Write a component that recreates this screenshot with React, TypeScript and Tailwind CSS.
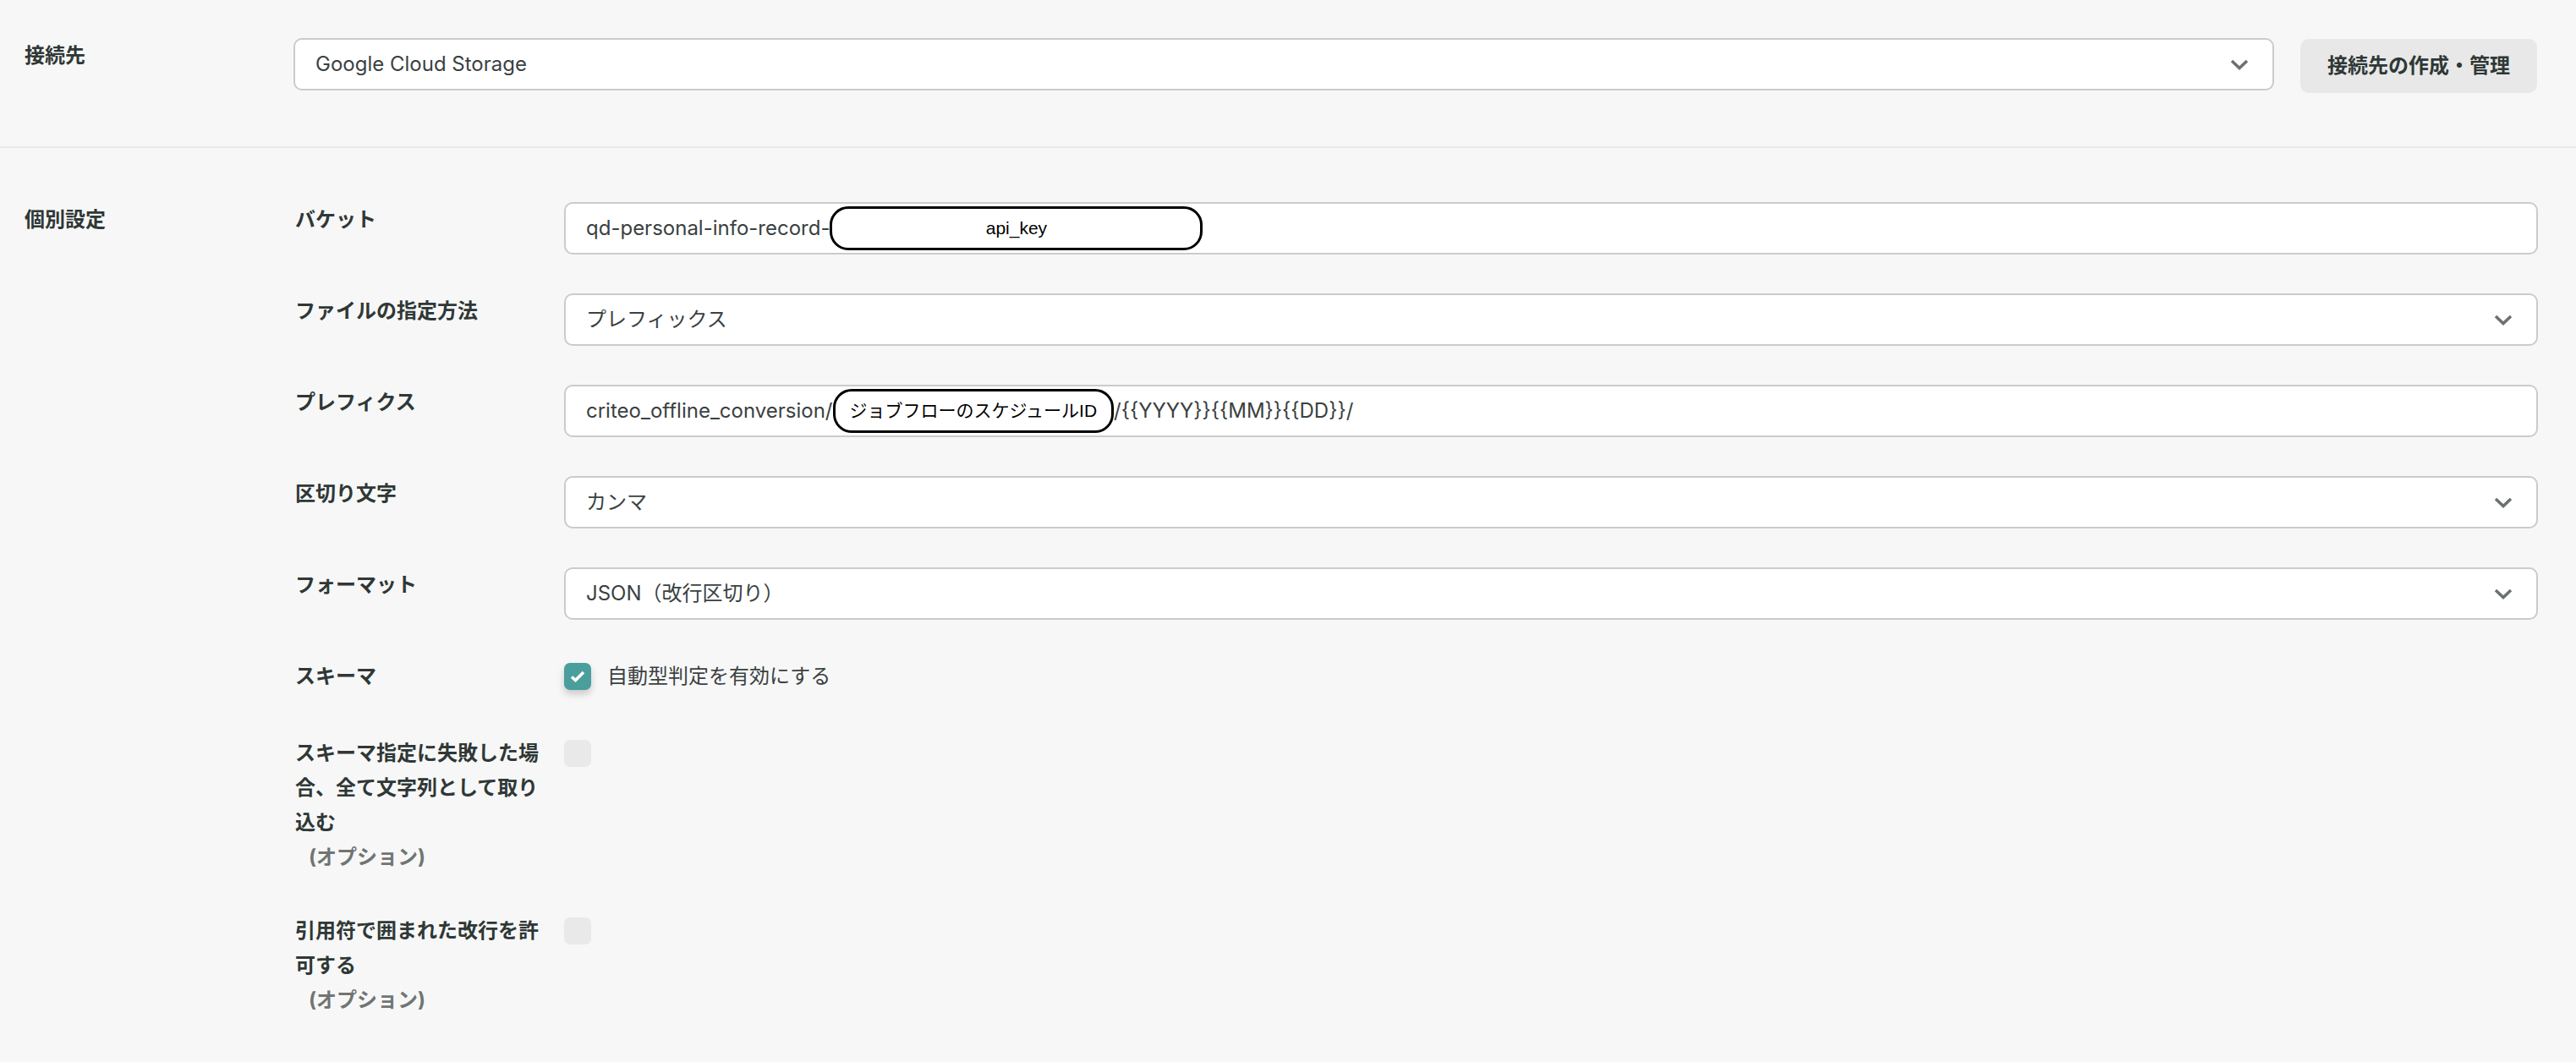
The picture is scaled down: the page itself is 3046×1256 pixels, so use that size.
import React from "react";

const Chevron = () => (
  <svg width="22" height="13" viewBox="0 0 22 13" fill="none">
    <path d="M2 2L11 10.5L20 2" stroke="#6b7070" strokeWidth="3.5" />
  </svg>
);

const Pill: React.FC<{ children: React.ReactNode; className?: string }> = ({
  children,
  className,
}) => (
  <span
    className={
      "inline-flex h-[52px] items-center justify-center rounded-[22px] border-[3px] border-black bg-white font-['Liberation_Sans','Noto_Sans_CJK_JP',sans-serif] text-[21px] text-black " +
      (className ?? "")
    }
  >
    {children}
  </span>
);

const Select: React.FC<{ value: string }> = ({ value }) => (
  <div className="flex h-[62px] flex-1 items-center justify-between rounded-[10px] border-2 border-[#cbcbcb] bg-white pl-[24px] pr-[28px] text-[#3a4141]">
    <span>{value}</span>
    <Chevron />
  </div>
);

const Checkbox: React.FC<{ checked?: boolean }> = ({ checked }) =>
  checked ? (
    <span className="mt-[5px] flex h-[32px] w-[32px] shrink-0 items-center justify-center rounded-[7px] bg-[#4a9e9c] shadow-[0_5px_9px_rgba(0,0,0,0.18)]">
      <svg width="18" height="14" viewBox="0 0 18 14" fill="none">
        <path d="M2 7.5L6.5 11.5L16 2" stroke="white" strokeWidth="3.6" />
      </svg>
    </span>
  ) : (
    <span className="mt-[5px] block h-[32px] w-[32px] shrink-0 rounded-[7px] bg-[#e9e9e9]" />
  );

const Row: React.FC<{
  label: React.ReactNode;
  children: React.ReactNode;
  className?: string;
}> = ({ label, children, className }) => (
  <div className={"flex items-start " + (className ?? "")}>
    <div className="w-[318px] shrink-0 pr-[24px] font-bold leading-[41px]">
      {label}
    </div>
    {children}
  </div>
);

const Optional = () => (
  <span className="block pl-[16px] text-[#6f7573]">(オプション)</span>
);

export default function App() {
  return (
    <div className="min-h-screen bg-[#f7f7f7] font-['Inter','Noto_Sans_CJK_JP',sans-serif] text-[24px] text-[#2f3836]">
      <section className="flex items-start border-b-2 border-[#e8e8e8] pb-[63px] pl-[29px] pr-[46px] pt-[45px]">
        <div className="w-[318px] shrink-0 font-bold leading-[41px]">
          接続先
        </div>
        <Select value="Google Cloud Storage" />
        <button className="ml-[31px] mt-[1px] h-[64px] w-[280px] shrink-0 rounded-[10px] bg-[#e8e8e8] font-bold text-[#2f3836]">
          接続先の作成・管理
        </button>
      </section>

      <section className="flex items-start pb-[40px] pl-[29px] pr-[45px] pt-[64px]">
        <div className="w-[320px] shrink-0 font-bold leading-[41px]">
          個別設定
        </div>
        <div className="flex flex-1 flex-col gap-[46px]">
          <Row label="バケット">
            <div className="flex h-[62px] flex-1 items-center rounded-[10px] border-2 border-[#cbcbcb] bg-white pl-[24px] text-[#3a4141]">
              <span>qd-personal-info-record-</span>
              <Pill className="w-[441px]">api_key</Pill>
            </div>
          </Row>
          <Row label="ファイルの指定方法">
            <Select value="プレフィックス" />
          </Row>
          <Row label="プレフィクス">
            <div className="flex h-[62px] flex-1 items-center rounded-[10px] border-2 border-[#cbcbcb] bg-white pl-[24px] text-[#3a4141]">
              <span>criteo_offline_conversion/</span>
              <Pill className="px-[17px]">ジョブフローのスケジュールID</Pill>
              <span>/{"{{YYYY}}{{MM}}{{DD}}"}/</span>
            </div>
          </Row>
          <Row label="区切り文字">
            <Select value="カンマ" />
          </Row>
          <Row label="フォーマット">
            <Select value="JSON（改行区切り）" />
          </Row>
          <Row label="スキーマ" className="mb-[4px]">
            <div className="flex items-start">
              <Checkbox checked />
              <span className="ml-[19px] leading-[41px] text-[#3a4141]">
                自動型判定を有効にする
              </span>
            </div>
          </Row>
          <Row
            label={
              <>
                スキーマ指定に失敗した場合、全て文字列として取り込む
                <Optional />
              </>
            }
          >
            <Checkbox />
          </Row>
          <Row
            label={
              <>
                引用符で囲まれた改行を許可する
                <Optional />
              </>
            }
          >
            <Checkbox />
          </Row>
        </div>
      </section>
    </div>
  );
}
